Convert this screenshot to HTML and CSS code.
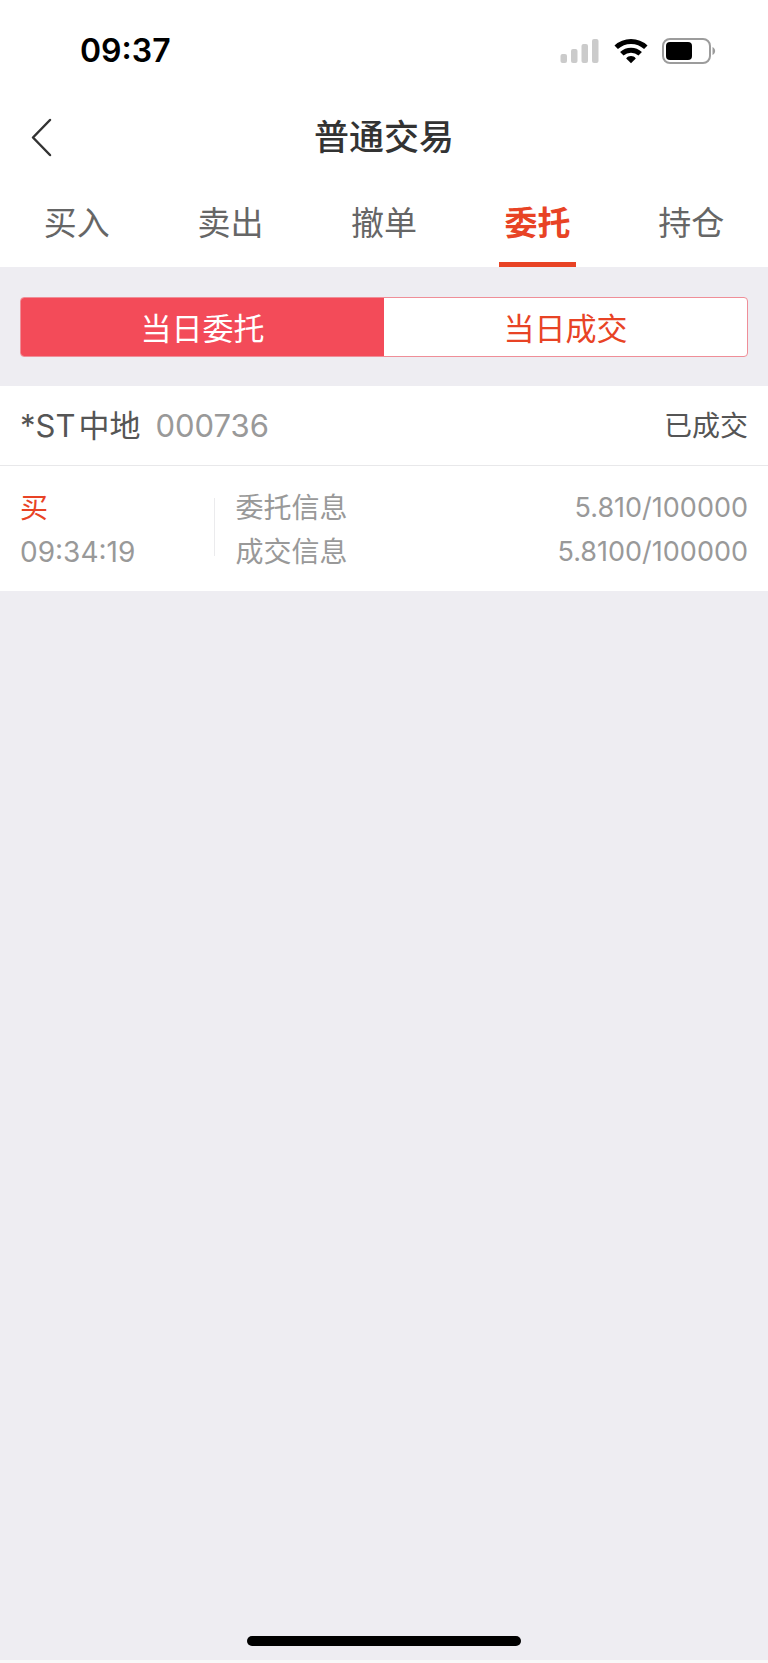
FILE: index.html
```html
<!DOCTYPE html>
<html lang="zh-CN">
<head>
<meta charset="utf-8">
<meta name="viewport" content="width=device-width, initial-scale=1">
<title>普通交易</title>
<link rel="stylesheet" href="styles.css">
</head>
<body>
<div class="app">
  <div class="status">
    <time class="clock">09:37</time>
    <div class="indicators">
      <svg width="40" height="26" viewBox="0 0 40 26" fill="#cbcbcb" aria-hidden="true">
        <rect x="0.5" y="16" width="6.5" height="9" rx="2"/>
        <rect x="11" y="11" width="6.5" height="14" rx="2"/>
        <rect x="21.500" y="6" width="6.500" height="19" rx="2"/>
        <rect x="32" y="1" width="6.500" height="24" rx="2"/>
      </svg>
      <svg width="34" height="26" viewBox="0 0 34 26" aria-hidden="true">
        <g fill="none" stroke="#000" stroke-width="5">
          <path d="M2.200 9.300C10.400 1.500 23.600 1.500 31.800 9.300"/>
          <path d="M7.800 15.800C13 10.900 21 10.900 26.200 15.800"/>
        </g>
        <path d="M12.200 20.400C14.500 17.300 19.500 17.300 21.800 20.400L17 25.200Z"/>
      </svg>
      <svg width="54" height="26" viewBox="0 0 54 26" aria-hidden="true">
        <rect x="1" y="1" width="47" height="24" rx="7" fill="none" stroke="#9c9c9c" stroke-width="2"/>
        <rect x="4" y="4" width="26" height="18" rx="4"/>
        <path d="M50.500 9C54 10.500 54 15.500 50.500 17Z" fill="#9c9c9c"/>
      </svg>
    </div>
  </div>
  <header class="nav">
    <button class="back" type="button" aria-label="返回">
      <svg width="22" height="40" viewBox="0 0 22 40" fill="none" stroke="#333" stroke-width="2.500" stroke-linecap="round" stroke-linejoin="round" aria-hidden="true"><path d="M19 3L2 20.500L19 38"/></svg>
    </button>
    <h1 class="title">普通交易</h1>
  </header>
  <nav class="tabs">
    <a class="tab" href="#buy">买入</a>
    <a class="tab" href="#sell">卖出</a>
    <a class="tab" href="#cancel">撤单</a>
    <a class="tab tab-active" href="#orders" aria-current="page">委托</a>
    <a class="tab" href="#positions">持仓</a>
  </nav>
  <main class="content">
    <div class="segments">
      <button class="segment segment-active" type="button">当日委托</button>
      <button class="segment" type="button">当日成交</button>
    </div>
    <article class="order">
      <div class="order-head">
        <h2 class="stock">*ST<span class="stock-cn">中地</span></h2>
        <span class="code">000736</span>
        <span class="state">已成交</span>
      </div>
      <div class="order-body">
        <div class="side">
          <span class="buy">买</span>
          <time>09:34:19</time>
        </div>
        <dl class="details">
          <div class="row"><dt>委托信息</dt><dd>5.810/100000</dd></div>
          <div class="row"><dt>成交信息</dt><dd>5.8100/100000</dd></div>
        </dl>
      </div>
    </article>
  </main>
  <div class="home"><div class="home-bar"></div></div>
</div>
</body>
</html>
```
FILE: styles.css
```css
* { box-sizing: border-box; }
body, h1, h2, dl, dd { margin: 0; }
body {
  background: #fff;
  color: #555;
  font-family: Inter, "Noto Sans CJK SC", sans-serif;
}
button { font-family: inherit; padding: 0; border: 0; background: none; }
svg { display: block; }

.app {
  display: flex;
  flex-direction: column;
  min-height: 100vh;
  background: #eeedf2;
  border-bottom: 3px solid #f8f8f8;
}

.status {
  display: flex;
  align-items: center;
  justify-content: space-between;
  height: 102px;
  padding: 0 52px 0 80px;
  background: #fff;
}
.clock { color: #000; font-size: 32px; line-height: 40px; font-weight: 600; }
.indicators { display: flex; align-items: center; gap: 14px; }

.nav {
  display: grid;
  grid-template-columns: 80px 1fr 80px;
  align-items: center;
  height: 70px;
  background: #fff;
}
.back { display: flex; align-items: center; height: 68px; padding-left: 31px; }
.title { color: #333; font-size: 35px; line-height: 48px; font-weight: 500; text-align: center; }

.tabs {
  display: grid;
  grid-template-columns: repeat(5, 1fr);
  justify-items: center;
  height: 95px;
  background: #fff;
}
.tab {
  width: 50%;
  display: flex;
  justify-content: center;
  padding-top: 27px;
  color: #666;
  font-size: 33px;
  line-height: 48px;
  text-decoration: none;
  white-space: nowrap;
}
.tab-active { color: #e84325; font-weight: 700; border-bottom: 5px solid #e84325; }

.content { flex: 1; }
.segments {
  display: grid;
  grid-template-columns: 1fr 1fr;
  height: 60px;
  margin: 30px 20px 29px;
  overflow: hidden;
  border: 1px solid #ef8e98;
  border-radius: 4px;
  background: #fff;
}
.segment { padding-top: 4px; color: #e84325; font-size: 31px; line-height: 48px; }
.segment-active { background: #f34b59; color: #fff; }

.order { background: #fff; }
.order-head {
  display: flex;
  align-items: center;
  height: 80px;
  padding: 0 20px;
  border-bottom: 1px solid #e8e8ea;
}
.stock { display: flex; gap: 3px; font-size: 31px; line-height: 44px; font-weight: 400; }
.code { margin-left: 15px; color: #999; font-size: 31px; line-height: 44px; }
.state { margin-left: auto; font-size: 28px; line-height: 44px; }

.order-body {
  display: flex;
  padding: 20px 20px 17px;
  color: #999;
  font-size: 28px;
  line-height: 44px;
}
.side { display: flex; flex-direction: column; width: 26.700%; }
.buy { color: #e84325; }
.details { position: relative; flex: 1; padding-left: 21px; }
.details::before {
  content: "";
  position: absolute;
  left: 0;
  top: 12px;
  bottom: 18px;
  width: 1px;
  background: #ebebed;
}
.row { display: flex; justify-content: space-between; }
.row dd { font-size: 27px; }

.home { display: flex; justify-content: center; padding-bottom: 14px; }
.home-bar { width: 274px; height: 10px; border-radius: 5px; background: #000; }
```
